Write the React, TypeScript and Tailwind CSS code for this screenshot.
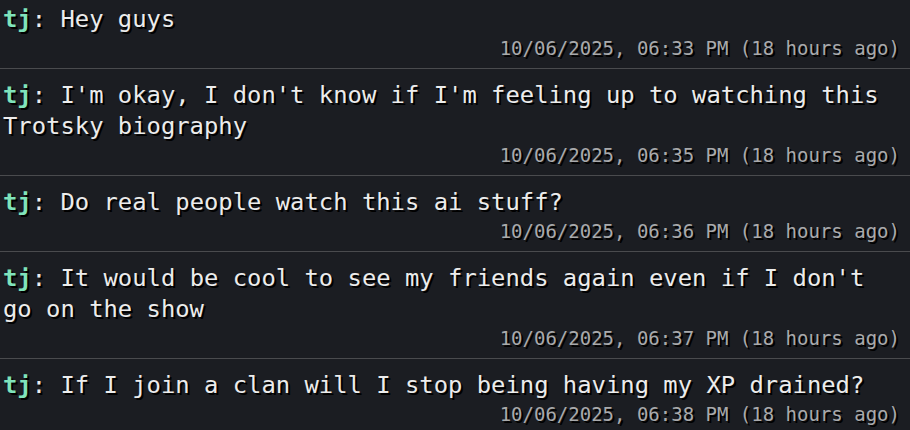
const messages = [
  { name: 'tj', text: 'Hey guys', time: '10/06/2025, 06:33 PM (18 hours ago)' },
  {
    name: 'tj',
    text: "I'm okay, I don't know if I'm feeling up to watching this Trotsky biography",
    time: '10/06/2025, 06:35 PM (18 hours ago)',
  },
  { name: 'tj', text: 'Do real people watch this ai stuff?', time: '10/06/2025, 06:36 PM (18 hours ago)' },
  {
    name: 'tj',
    text: "It would be cool to see my friends again even if I don't go on the show",
    time: '10/06/2025, 06:37 PM (18 hours ago)',
  },
  {
    name: 'tj',
    text: 'If I join a clan will I stop being having my XP drained?',
    time: '10/06/2025, 06:38 PM (18 hours ago)',
  },
];

export default function App() {
  return (
    <div className="h-[430px] w-[910px] overflow-hidden bg-[#1b1d22] font-['DejaVu_Sans_Mono',monospace] [text-shadow:2px_2px_0_#000]">
      <div className="-mt-[7px]">
        {messages.map((m, i) => (
          <div key={i} className="border-b border-[#4a4b4e] pt-[11px] pb-[7px] pl-[3px] pr-[10px]">
            <p className="text-[23.85px] leading-[31px] text-[#ececec]">
              <span className="font-bold text-[#7fe3bb]">{m.name}</span>
              <span>: {m.text}</span>
            </p>
            <p className="text-right text-[19px] leading-[26px] text-[#a9aaac]">{m.time}</p>
          </div>
        ))}
      </div>
    </div>
  );
}
